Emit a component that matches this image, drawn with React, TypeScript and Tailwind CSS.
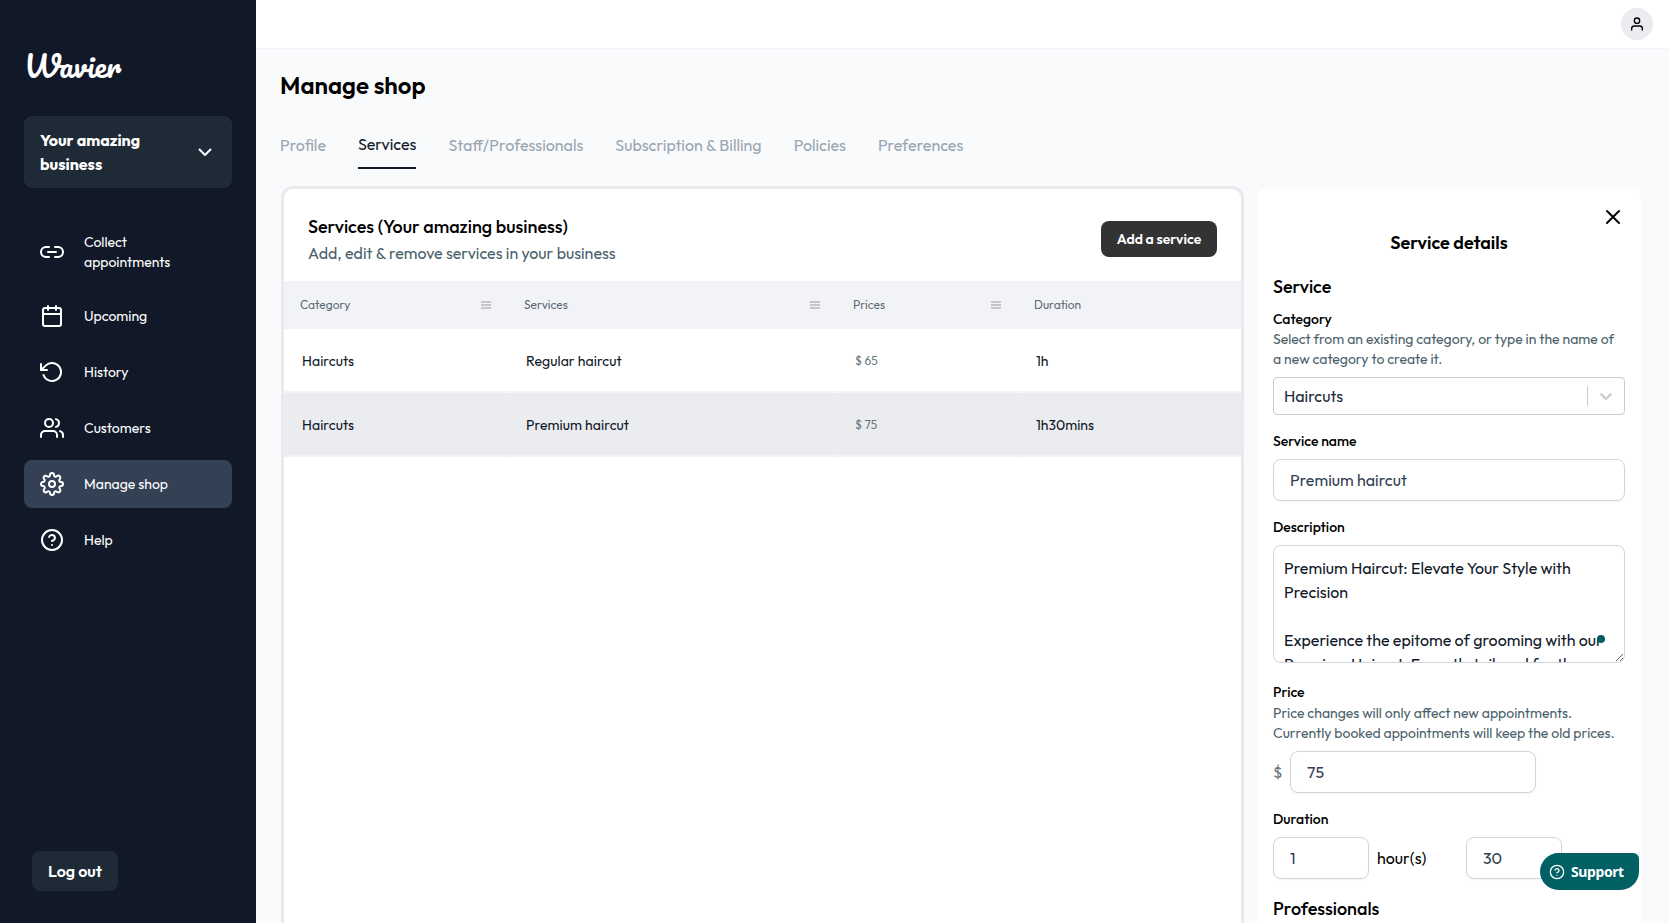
import type { ReactNode } from 'react'
import {
  FiCalendar,
  FiHelpCircle,
  FiLink2,
  FiRotateCcw,
  FiSettings,
  FiUser,
  FiUsers,
  FiX,
} from 'react-icons/fi'

const navItems = [
  { label: 'Collect appointments', icon: FiLink2 },
  { label: 'Upcoming', icon: FiCalendar },
  { label: 'History', icon: FiRotateCcw },
  { label: 'Customers', icon: FiUsers },
  { label: 'Manage shop', icon: FiSettings, active: true },
  { label: 'Help', icon: FiHelpCircle },
]

const tabs = [
  'Profile',
  'Services',
  'Staff/Professionals',
  'Subscription & Billing',
  'Policies',
  'Preferences',
]

const services = [
  { category: 'Haircuts', name: 'Regular haircut', price: '$ 65', duration: '1h' },
  { category: 'Haircuts', name: 'Premium haircut', price: '$ 75', duration: '1h30mins', selected: true },
]

const description = `Premium Haircut: Elevate Your Style with Precision

Experience the epitome of grooming with our Premium Haircut. Expertly tailored for the`

function MenuIcon() {
  return (
    <svg width="10" height="8" viewBox="0 0 10 8" fill="#c6c6c6">
      <rect width="10" height="2" />
      <rect y="3" width="10" height="2" />
      <rect y="6" width="10" height="2" />
    </svg>
  )
}

function Sidebar() {
  return (
    <aside className="flex w-64 shrink-0 flex-col bg-[#111827] px-6 text-white">
      <div className="mt-[38px] h-14 text-[30px] leading-[56px] font-['Pacifico',cursive]">Wavier</div>

      <button className="mt-[22px] flex h-[72px] shrink-0 items-center justify-between rounded-lg bg-[#1f2a37] px-4 text-left">
        <span className="w-28 font-bold leading-6">Your amazing business</span>
        <svg className="mr-1" width="14" height="8" viewBox="0 0 14 8" fill="none" stroke="white" strokeWidth="2">
          <path d="M1 1l6 6 6-6" />
        </svg>
      </button>

      <nav className="mt-8 flex flex-col gap-2">
        {navItems.map(({ label, icon: Icon, active }) => (
          <a
            key={label}
            className={`flex items-center gap-5 rounded-lg px-4 py-3 text-sm ${active ? 'bg-[#344054]' : ''}`}
          >
            <Icon size={24} />
            <span className="w-28">{label}</span>
          </a>
        ))}
      </nav>

      <button className="mt-auto mb-8 ml-2 h-10 self-start rounded-lg bg-[#1f2a37] px-4 font-semibold">
        Log out
      </button>
    </aside>
  )
}

function HeadCell({ label, menu = true }: { label: string; menu?: boolean }) {
  return (
    <div className="flex items-center justify-between pr-[17px] pl-4">
      <span>{label}</span>
      {menu && <MenuIcon />}
    </div>
  )
}

function Cell({ children, selected }: { children: ReactNode; selected?: boolean }) {
  return (
    <div
      className={`flex h-16 items-center rounded-[3px] border-b-2 border-[#f2f3f7] px-[18px] pt-0.5 ${
        selected ? 'bg-[#ebecf0]' : 'bg-white'
      }`}
    >
      {children}
    </div>
  )
}

function ServicesCard() {
  return (
    <section className="flex w-[963px] flex-col overflow-hidden rounded-t-xl border-[3px] border-b-0 border-[#e9eaee] bg-white">
      <div className="flex h-[92px] shrink-0 items-center justify-between px-6 pt-2">
        <div>
          <h2 className="text-lg leading-7 font-medium">Services (Your amazing business)</h2>
          <p className="leading-6 text-[#4b5f6b]">Add, edit &amp; remove services in your business</p>
        </div>
        <button className="h-9 w-[116px] rounded-lg bg-[#333] text-sm font-semibold text-white">Add a service</button>
      </div>
      <div className="grid h-12 shrink-0 grid-cols-[224px_329px_181px_1fr] bg-[#f2f3f7] text-xs text-[#5d6b76]">
        <HeadCell label="Category" />
        <HeadCell label="Services" />
        <HeadCell label="Prices" />
        <HeadCell label="Duration" menu={false} />
      </div>
      {services.map((row) => (
        <div
          key={row.name}
          className={`grid grid-cols-[224px_329px_181px_1fr] text-sm text-[#101828] ${row.selected ? 'bg-[#ebecf0]' : ''}`}
        >
          <Cell selected={row.selected}>
            <span className="tracking-[0.06px]">{row.category}</span>
          </Cell>
          <Cell selected={row.selected}>
            <span className="tracking-[0.06px]">{row.name}</span>
          </Cell>
          <Cell selected={row.selected}>
            <span className="text-xs text-[#667680]">{row.price}</span>
          </Cell>
          <Cell selected={row.selected}>{row.duration}</Cell>
        </div>
      ))}
    </section>
  )
}

function Label({ children }: { children: ReactNode }) {
  return <div className="text-sm leading-5 font-medium">{children}</div>
}

const inputClass = 'h-[42px] rounded-lg border border-[#d0d5dd] px-4 text-[#344054] shadow-xs outline-none'

function DetailsPanel() {
  return (
    <section className="mt-[3px] ml-[13px] w-96 overflow-hidden rounded-t-lg bg-white px-4 text-black">
      <div className="flex h-10 items-end justify-end">
        <FiX size={24} />
      </div>
      <h2 className="text-center text-lg leading-7 font-semibold">Service details</h2>

      <h3 className="mt-4 text-lg leading-7 font-medium">Service</h3>
      <div className="mt-2">
        <Label>Category</Label>
        <p className="pr-2 text-sm text-[#4b5f6b]">
          Select from an existing category, or type in the name of a new category to create it.
        </p>
      </div>
      <div className="mt-2 flex h-[38px] items-center rounded-sm border border-[#ccc] pl-2.5">
        <span className="flex-1 text-[#1d2939]">Haircuts</span>
        <span className="h-5 w-px bg-[#ccc]" />
        <svg className="mx-2" width="20" height="20" viewBox="0 0 20 20" fill="#ccc">
          <path d="M4.516 7.548c0.436-0.446 1.043-0.481 1.576 0l3.908 3.747 3.908-3.747c0.533-0.481 1.141-0.446 1.574 0 0.436 0.445 0.408 1.197 0 1.615-0.406 0.418-4.695 4.502-4.695 4.502-0.217 0.223-0.502 0.335-0.787 0.335s-0.57-0.112-0.789-0.335c0 0-4.287-4.084-4.695-4.502s-0.436-1.17 0-1.615z" />
        </svg>
      </div>

      <div className="mt-4">
        <Label>Service name</Label>
      </div>
      <input className={`${inputClass} mt-2 w-full`} defaultValue="Premium haircut" />

      <div className="mt-4">
        <Label>Description</Label>
      </div>
      <div className="relative mt-2">
        <textarea
          className="block h-[118px] w-full overflow-hidden rounded-lg border border-[#d0d5dd] px-2.5 pt-2.5 leading-6 text-[#101828] outline-none"
          defaultValue={description}
        />
        <span className="absolute right-5 bottom-5 size-2 rounded-full bg-[#006064]" />
      </div>

      <div className="mt-[19px]">
        <Label>Price</Label>
        <p className="mt-px text-sm text-[#4b5f6b]">
          Price changes will only affect new appointments. Currently booked appointments will keep the old prices.
        </p>
      </div>
      <div className="mt-2 flex items-center gap-2">
        <span className="w-[9px] text-[#667680]">$</span>
        <input className={`${inputClass} w-[246px]`} defaultValue="75" />
      </div>

      <div className="mt-4">
        <Label>Duration</Label>
      </div>
      <div className="mt-2 flex items-center">
        <input className={`${inputClass} w-24`} defaultValue="1" />
        <span className="ml-2 w-[89px]">hour(s)</span>
        <input className={`${inputClass} w-24`} defaultValue="30" />
      </div>

      <h3 className="mt-4 text-lg leading-7 font-medium">Professionals</h3>
    </section>
  )
}

export default function App() {
  return (
    <div className="flex h-screen overflow-hidden bg-[#f9fafb] text-base text-black font-['Outfit',sans-serif]">
      <Sidebar />
      <div className="flex min-w-0 flex-1 flex-col">
        <header className="flex h-[49px] shrink-0 items-center justify-end border-b border-[#f2f3f7] bg-white px-4">
          <div className="flex size-8 items-center justify-center rounded-full bg-[#ebecf0]">
            <FiUser size={16} />
          </div>
        </header>

        <main className="flex min-h-0 flex-1 flex-col pl-6">
          <h1 className="mt-5 text-2xl leading-8 font-semibold">Manage shop</h1>
          <div className="mt-5 flex h-12 shrink-0 gap-8">
            {tabs.map((tab) => (
              <div
                key={tab}
                className={
                  tab === 'Services'
                    ? 'flex items-center border-b-2 border-[#101828] text-[#101828]'
                    : 'flex items-center text-[#98a6b3]'
                }
              >
                {tab}
              </div>
            ))}
          </div>
          <div className="mt-[17px] ml-px flex min-h-0 flex-1">
            <ServicesCard />
            <DetailsPanel />
          </div>
        </main>
      </div>

      <button className="fixed right-[30px] bottom-[33px] flex h-[37px] w-[99px] items-center gap-1.5 rounded-[20px] rounded-tr-md bg-[#006064] pl-[9px] text-sm font-bold tracking-[-0.4px] text-white font-['Noto_Sans',sans-serif]">
        <FiHelpCircle size={16} />
        Support
      </button>
    </div>
  )
}
